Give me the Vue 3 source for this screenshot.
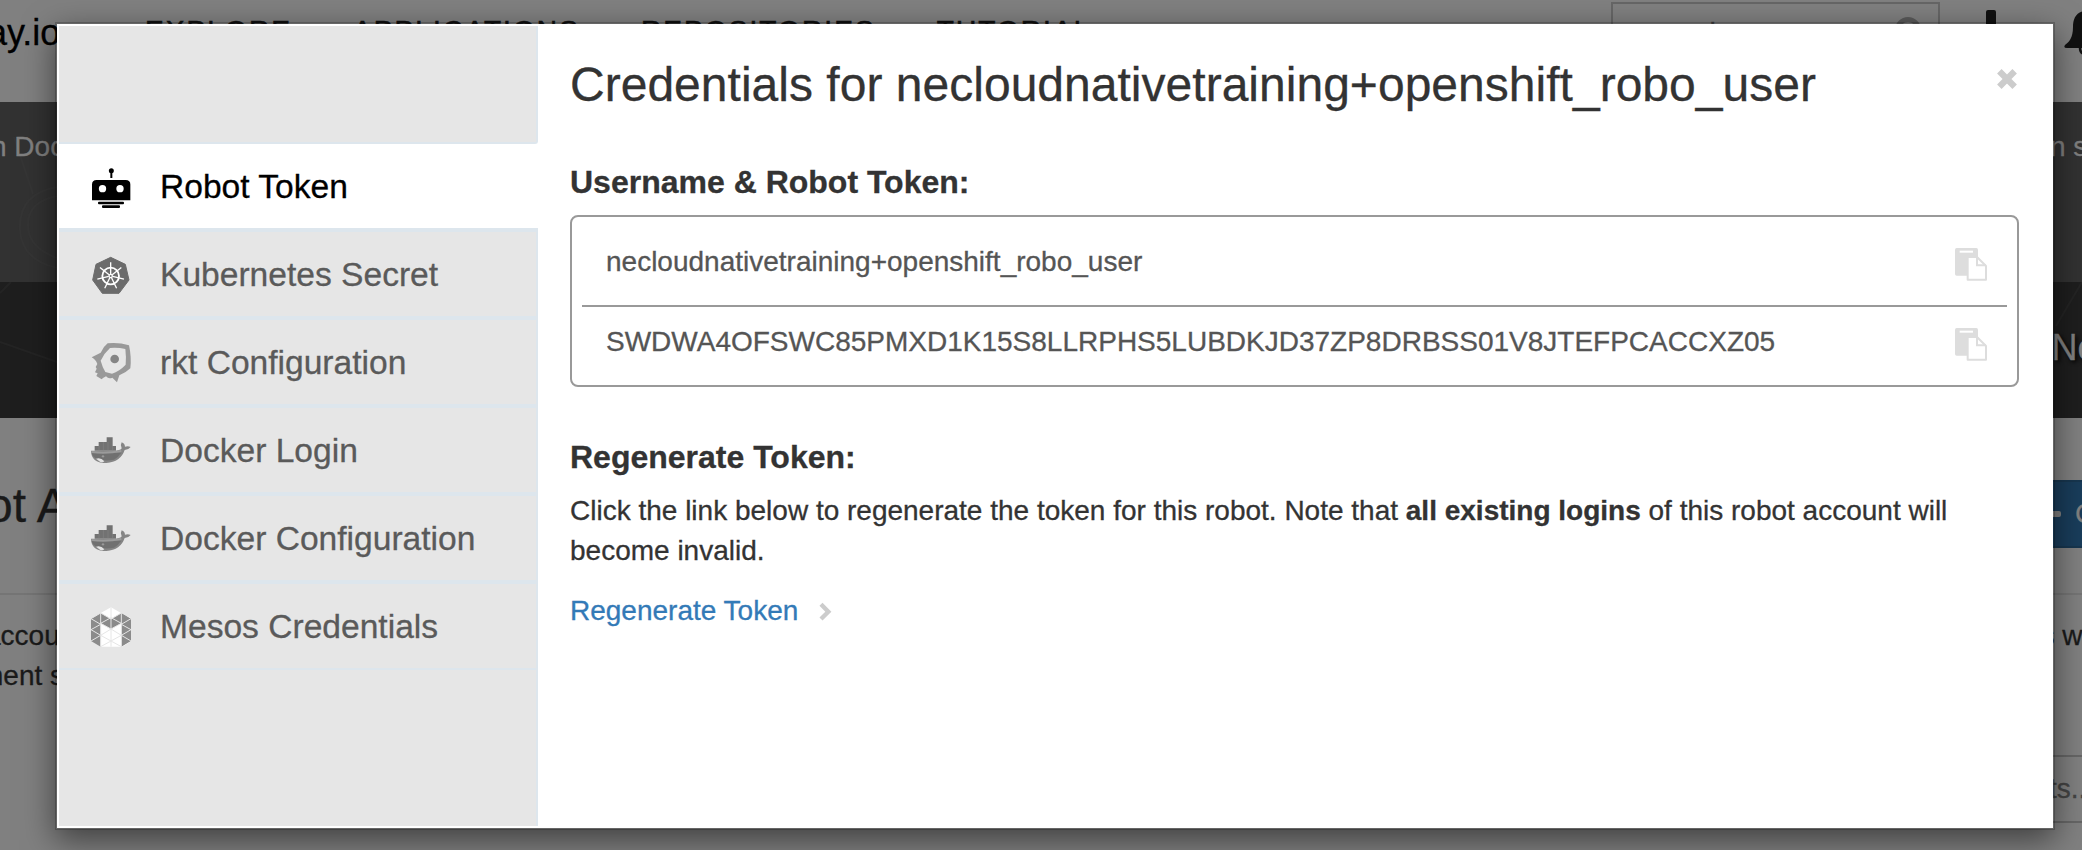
<script setup>
const navLinks = ['EXPLORE', 'APPLICATIONS', 'REPOSITORIES', 'TUTORIAL']

const tabs = [
  { id: 'robot', label: 'Robot Token', icon: 'robot', active: true },
  { id: 'kubernetes', label: 'Kubernetes Secret', icon: 'kubernetes' },
  { id: 'rkt', label: 'rkt Configuration', icon: 'rkt' },
  { id: 'docker-login', label: 'Docker Login', icon: 'docker' },
  { id: 'docker-config', label: 'Docker Configuration', icon: 'docker' },
  { id: 'mesos', label: 'Mesos Credentials', icon: 'mesos' },
]

const credentials = [
  'necloudnativetraining+openshift_robo_user',
  'SWDWA4OFSWC85PMXD1K15S8LLRPHS5LUBDKJD37ZP8DRBSS01V8JTEFPCACCXZ05',
]

const spokes = [0, 1, 2, 3, 4, 5, 6].map((n) => (n * 360) / 7)
</script>

<template>
  <div class="screen">
    <div class="page">
      <header class="topbar">
        <span class="brand">ay.io</span>
        <nav class="nav">
          <span v-for="link in navLinks" :key="link" class="nav-link">{{ link }}</span>
        </nav>
        <div class="search">
          <span>search</span>
          <svg class="magnifier" width="34" height="34" viewBox="0 0 34 34">
            <circle cx="14" cy="14" r="10.5" fill="none" stroke="#5a5a5a" stroke-width="5" />
            <path d="M22 22L31 31" stroke="#5a5a5a" stroke-width="6" />
          </svg>
        </div>
        <svg class="plus" width="36" height="38" viewBox="0 0 36 38">
          <path d="M15 0h6a2 2 0 0 1 2 2v13h11v8H23v13H13V23H0V15h13V2a2 2 0 0 1 2-2z" fill="#111" />
        </svg>
        <svg class="bell" width="44" height="46" viewBox="0 0 44 46">
          <path d="M21 0C12 1 9 8 9 16C9 27 5 31 1 34Q-1 37 3 37H39Q43 37 41 34C37 31 33 27 33 16C33 8 30 1 21 0z" fill="#111" />
          <path d="M16 37Q16 43 22 43" fill="none" stroke="#111" stroke-width="2.5" />
        </svg>
      </header>

      <div class="banner">
        <svg class="pattern" width="57" height="180" viewBox="0 0 57 180">
          <path d="M14 35L33 92M57 166Q22 158 20 128Q18 92 57 85M57 156Q27 145 28 122Q28 100 57 94" fill="none" stroke="#353535" stroke-width="2" />
        </svg>
        <span class="banner-left">n Docker</span>
        <span class="banner-right">n s</span>
      </div>

      <div class="hero">
        <svg class="pattern" width="2082" height="136" viewBox="0 0 2082 136">
          <path d="M0 60L57 80M0 11L11 0M2056 44L2082 0" fill="none" stroke="#242424" stroke-width="2" />
        </svg>
        <span class="hero-title">Ne</span>
      </div>

      <div class="heading">
        <span class="heading-title">ot Accounts</span>
        <div class="create">
          <svg class="create-plus" width="24" height="24" viewBox="0 0 24 24">
            <path d="M9 0h6v9h7a2 2 0 0 1 2 2v2a2 2 0 0 1-2 2h-7v9H9v-9H0V9h9z" fill="#808080" />
          </svg>
          <span>C</span>
        </div>
      </div>

      <div class="intro">
        <div class="intro-left">
          <div>accounts</div>
          <div class="intro-second">ment s</div>
        </div>
        <div class="intro-right">s w</div>
      </div>
      <div class="filter"><span>ts...</span></div>
    </div>

    <section class="modal">
      <aside class="sidebar">
        <div class="sidebar-top"></div>
        <div v-for="tab in tabs" :key="tab.id" class="tab" :class="{ active: tab.active }">
          <svg class="tab-icon" width="44" height="88" viewBox="0 0 132 264">
            <g v-if="tab.icon === 'robot'">
              <circle cx="64" cy="86" r="7.5" />
              <path d="M61 86h6v22h-6z" />
              <path d="M6 175V128Q6 114 20 114H107Q121 114 121 128V175z" />
              <circle cx="37.500" cy="140" r="11" fill="#fff" />
              <circle cx="90" cy="140" r="11" fill="#fff" />
              <rect x="24" y="179" width="78" height="8" rx="3" />
              <rect x="36" y="190" width="54" height="8" rx="3" />
            </g>
            <g v-else-if="tab.icon === 'kubernetes'">
              <path d="M62 82L106 103L117 150L87 190H37L8 150L18 103z" fill="#6b6b6b" stroke="#6b6b6b" stroke-width="3" stroke-linejoin="round" />
              <circle cx="62" cy="138" r="25" fill="none" stroke="#fff" stroke-width="5.500" />
              <path v-for="angle in spokes" :key="angle" d="M62 132V97" :transform="`rotate(${angle} 62 138)`" stroke="#fff" stroke-width="4" />
              <circle cx="62" cy="138" r="7" fill="#fff" />
              <circle cx="62" cy="138" r="3" fill="#6b6b6b" />
            </g>
            <g v-else-if="tab.icon === 'rkt'">
              <path d="M53 76Q85 72 117 82Q125 118 121 151Q108 164 88 172L81 193L67 179Q56 184 48 175L39 180L35 184L19 174L23 166L15 163L20 152L17 147L22 138Q17 124 5 118L32 104Q40 86 53 76z" fill="#999" />
              <path d="M60 90Q84 88 106 93Q109 116 107 140Q88 160 66 167L46 162Q37 147 32 128Q43 105 60 90z" fill="#e6e6e6" />
              <circle cx="74" cy="123" r="13" fill="#858585" />
            </g>
            <g v-else-if="tab.icon === 'docker'">
              <path d="M50 94h18v14H50zM26 108h42v12H26zM14 120h64v14H14z" fill="#727272" />
              <path d="M40 108v26M54 108v26M68 120v14M27 120v14" stroke="#898989" stroke-width="1.500" />
              <path d="M3 134H78Q92 133 95 127Q90 117 95 109Q104 112 105 122Q114 119 122 123Q115 132 104 132Q92 168 49 171Q4 172 3 134z" fill="#858585" />
              <path d="M5 140H94Q84 154 72 161Q48 166 22 160Q7 152 5 140z" fill="#707070" />
              <path d="M5 138Q50 143 94 135" fill="none" stroke="#9b9b9b" stroke-width="6" />
              <path d="M18 158Q32 153 43 166Q38 171 31 168z" fill="#e3e3e3" />
              <circle cx="39" cy="151" r="3.500" fill="#999" />
            </g>
            <g v-else>
              <path d="M63 76L93 93V122L123 93V194H32V93z" fill="#fff" />
              <path d="M32 93V194L3 177V110zM94 93V194L123 177V110zM32 93L63 111L94 93V124L63 141L32 124z" fill="#8b8b8b" />
              <path d="M94 93L126 110V90H94zM94 196L126 196V176z" fill="#e6e6e6" />
              <path d="M32 90V194M94 90V194M63 76V194M3 110L32 127M3 143L32 160M3 143L32 127M3 177L32 160M3 110L32 93M32 124L63 107L94 124M32 93L63 111L94 93M32 124L63 141L94 124M32 160L63 141L94 160M32 160L63 177L94 160M32 194L63 177L94 194M123 110L94 127L123 143L94 160L123 177" fill="none" stroke="#e6e6e6" stroke-width="3" />
            </g>
          </svg>
          <span class="tab-label">{{ tab.label }}</span>
        </div>
        <div class="sidebar-rest"></div>
      </aside>

      <main class="content">
        <div class="title-row">
          <h1>Credentials for necloudnativetraining+openshift_robo_user</h1>
          <svg class="close" width="20" height="20" viewBox="0 0 60 60">
            <path d="M7 7L53 53M53 7L7 53" stroke="#ccc" stroke-width="19" />
          </svg>
        </div>

        <h2>Username &amp; Robot Token:</h2>
        <div class="box">
          <div v-for="value in credentials" :key="value" class="box-row">
            <span class="value">{{ value }}</span>
            <svg class="copy" width="33" height="33" viewBox="0 0 99 99">
              <rect width="69" height="83" rx="5" fill="#ddd" />
              <path d="M14 8h40v6H14z" fill="#fff" />
              <path d="M38 27H66L93 54V95H38z" fill="#fff" stroke="#ddd" stroke-width="6" stroke-linejoin="round" />
              <path d="M66 28V52H93" fill="none" stroke="#ddd" stroke-width="6" />
            </svg>
          </div>
        </div>

        <h2 class="regenerate-heading">Regenerate Token:</h2>
        <p>Click the link below to regenerate the token for this robot. Note that <strong>all existing logins</strong> of this robot account will become invalid.</p>
        <a class="regenerate">
          Regenerate Token
          <svg class="chevron" width="13" height="20" viewBox="0 0 39 60">
            <path d="M6 7L28 29L6 51" fill="none" stroke="#ccc" stroke-width="13" />
          </svg>
        </a>
      </main>
    </section>
  </div>
</template>

<style>
html,
body {
  margin: 0;
  overflow: hidden;
}
</style>

<style scoped>
.screen {
  position: relative;
  width: 2082px;
  height: 850px;
  overflow: hidden;
  background: #808080;
  font-family: "Liberation Sans", Arial, sans-serif;
  font-size: 28px;
  line-height: 40px;
  color: #333;
  box-sizing: border-box;
  -webkit-text-stroke: 0.3px;
}
.screen * {
  box-sizing: border-box;
}
svg {
  display: block;
  flex: none;
}
.page {
  width: 2082px;
  white-space: nowrap;
  color: #1a1a1a;
}
.topbar {
  display: flex;
  height: 102px;
  overflow: hidden;
}
.topbar > * {
  flex: none;
}
.brand {
  width: 158px;
  margin-left: -13px;
  padding-top: 13px;
  font-size: 36px;
  color: #000;
}
.nav {
  display: flex;
  gap: 61px;
  width: 1466px;
  padding-top: 11px;
  letter-spacing: 2.1px;
  color: #111;
  -webkit-text-stroke: 0.6px #111;
}
.search {
  display: flex;
  justify-content: space-between;
  width: 329px;
  height: 60px;
  margin-top: 2px;
  padding: 9px 10px 0 28px;
  border: 2px solid #666;
  color: #444;
}
.magnifier {
  margin-top: 3px;
}
.plus {
  margin: 10px 0 0 33px;
}
.bell {
  margin: 11px 0 0 55px;
}
.banner {
  position: relative;
  display: flex;
  justify-content: space-between;
  height: 180px;
  padding-top: 25px;
  background: #323232;
  color: #808080;
}
.banner-left {
  position: relative;
  margin-left: -9px;
}
.banner-right {
  width: 32px;
}
.pattern {
  position: absolute;
  top: 0;
  left: 0;
}
.hero {
  position: relative;
  display: flex;
  justify-content: flex-end;
  height: 136px;
  padding-top: 46px;
  background: #1e1e1e;
}
.hero-title {
  position: relative;
  width: 30.500px;
  font-size: 36px;
  color: #808080;
  text-shadow: 2px 2px 4px #000;
}
.heading {
  display: flex;
  justify-content: space-between;
  height: 177px;
  padding-top: 62px;
  border-bottom: 2px solid #757575;
}
.heading-title {
  margin: 6px 0 0 -14px;
  font-size: 48px;
  line-height: 40px;
}
.create {
  display: flex;
  align-items: center;
  gap: 14px;
  width: 46px;
  height: 68px;
  border: 2px solid #17364f;
  border-right: 0;
  background: #193d5b;
  color: #808080;
}
.create-plus {
  margin-left: -1px;
}
.intro {
  display: flex;
  justify-content: space-between;
  height: 160px;
  padding-top: 21px;
}
.intro-left {
  margin-left: -15px;
}
.intro-second {
  margin-left: -5px;
}
.intro-right {
  width: 41.500px;
}
.filter {
  display: flex;
  justify-content: flex-end;
  width: 600px;
  height: 68px;
  margin-left: auto;
  padding-top: 12px;
  border: solid #666;
  border-width: 2px 0;
  color: #444;
}
.filter span {
  width: 33px;
}
.modal {
  position: absolute;
  top: 22px;
  left: 55px;
  display: flex;
  width: 2000px;
  height: 808px;
  padding: 2px;
  border: 2px solid rgba(0, 0, 0, 0.2);
  background: #fff;
  background-clip: padding-box;
  box-shadow: 0 10px 30px rgba(0, 0, 0, 0.5);
}
.sidebar {
  display: flex;
  flex-direction: column;
  width: 479px;
  font-size: 33.600px;
  color: #5a5a5a;
}
.sidebar-top {
  height: 118px;
  border: solid #dde6ed;
  border-width: 0 2px 2px 0;
  border-bottom-right-radius: 3px;
  background: #e6e6e6;
}
.tab {
  display: flex;
  align-items: center;
  height: 88px;
  padding-left: 31px;
  border: 2px solid #dde6ed;
  border-left: 0;
  background: #e6e6e6;
}
.tab.active {
  height: 86px;
  border-top: 0;
  border-right: 0;
  background: #fff;
  color: #000;
}
.tab-icon {
  margin-right: 26px;
}
.tab-label {
  padding-top: 2px;
}
.sidebar-rest {
  flex: 1;
  border-right: 2px solid #dde6ed;
  background: #e6e6e6;
}
.content {
  flex: 1;
  padding: 29px 32px 0;
}
.title-row {
  display: flex;
  justify-content: space-between;
}
h1 {
  margin: 0;
  font-size: 48px;
  font-weight: 400;
  line-height: 60px;
  letter-spacing: 0.020px;
  white-space: nowrap;
}
.close {
  margin: 14px 2px 0 0;
}
h2 {
  margin: 45px 0 0;
  font-size: 32px;
  font-weight: 700;
  line-height: 44px;
}
.box {
  width: 1449px;
  height: 172px;
  margin-top: 11px;
  padding: 0 10px;
  border: 2px solid #999;
  border-radius: 8px;
}
.box-row {
  display: flex;
  align-items: center;
  justify-content: space-between;
  height: 68px;
  padding: 0 19px 0 24px;
  color: #555;
}
.box-row:first-child {
  height: 90px;
  border-bottom: 2px solid #999;
}
.value {
  padding-top: 1px;
}
.copy {
  margin-top: 7px;
}
.regenerate-heading {
  margin-top: 48px;
}
p {
  width: 1400px;
  margin: 12px 0 20px;
}
.regenerate {
  display: flex;
  align-items: center;
  gap: 21px;
  color: #337ab7;
}
.chevron {
  margin-top: 2px;
}
</style>
